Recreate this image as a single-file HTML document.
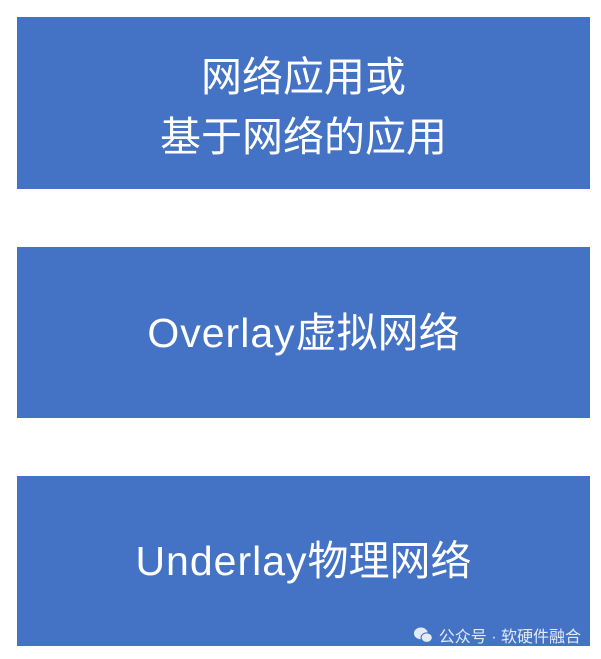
<!DOCTYPE html>
<html><head><meta charset="utf-8"><style>
html,body{margin:0;padding:0;background:#fff;width:601px;height:659px;overflow:hidden}
.b{position:absolute;left:17px;width:573px;background:#4472c4;color:#fff;box-sizing:border-box;
font-family:"Liberation Sans","Noto Sans CJK SC",sans-serif;font-size:41px;
display:flex;flex-direction:column;align-items:center;justify-content:center;line-height:60px}
.l{letter-spacing:1px}
.w{position:absolute;right:20px;top:623px;color:#fff;opacity:.85;font-family:"Liberation Sans","Noto Sans CJK SC",sans-serif;font-size:16px;display:flex;align-items:center;gap:6px}
</style></head><body>
<div class="b" style="top:17px;height:172px;padding-top:8px"><div>网络应用或</div><div>基于网络的应用</div></div>
<div class="b" style="top:247px;height:171px"><div><span class="l">Overlay</span>虚拟网络</div></div>
<div class="b" style="top:476px;height:170px"><div><span class="l">Underlay</span>物理网络</div></div>
<div class="w"><svg width="20" height="16" viewBox="0 0 18 15"><ellipse cx="7" cy="6" rx="6.5" ry="5.5" fill="#fff"/><ellipse cx="12.5" cy="10" rx="5.3" ry="4.5" fill="#fff" stroke="#4472c4" stroke-width="1"/></svg>公众号 · 软硬件融合</div>
</body></html>
